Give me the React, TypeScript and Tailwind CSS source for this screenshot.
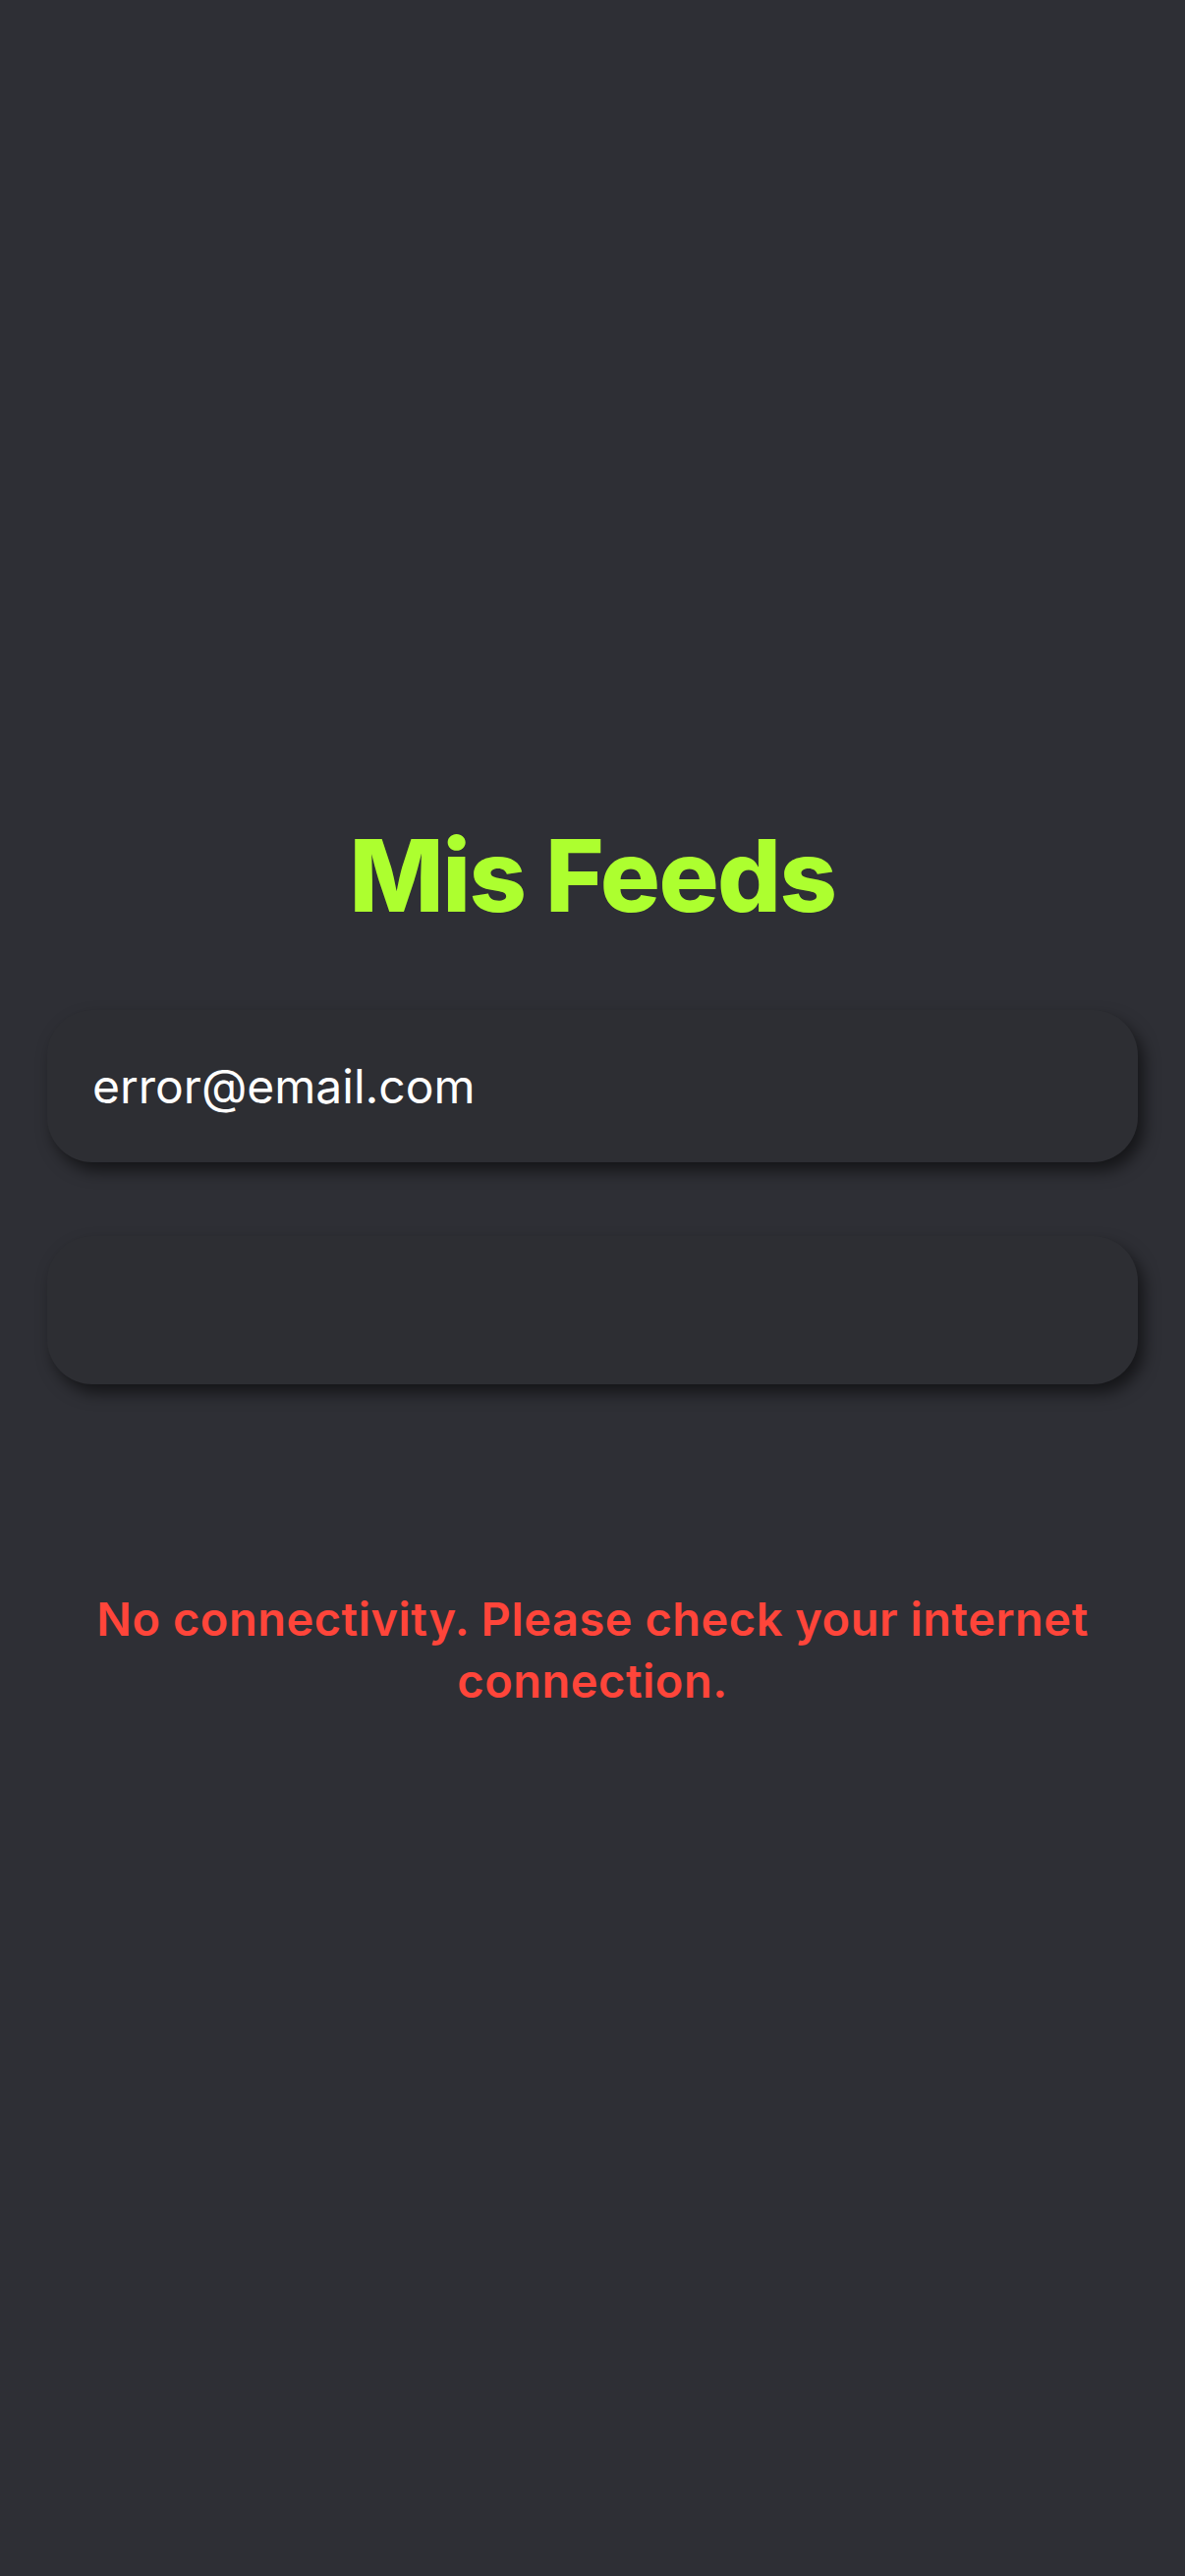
export default function App() {
  return (
    <div className="min-h-[2622px] w-full bg-[#2e2f35] font-['Inter','Noto_Sans',sans-serif]">
      <div className="flex flex-col px-[48px] pt-[840px]">
        <h1 className="text-center text-[102px] font-extrabold leading-none tracking-[-1.6px] text-[#adff2f]">
          Mis Feeds
        </h1>

        <div className="mt-[86px] flex h-[155px] items-center rounded-[46px] bg-[#2d2e33] px-[46px] shadow-[6px_9px_16px_rgba(0,0,0,0.55)]">
          <span className="text-[48px] text-white">error@email.com</span>
        </div>

        <div className="mt-[75px] h-[151px] rounded-[46px] bg-[#2d2e33] shadow-[6px_9px_16px_rgba(0,0,0,0.55)]" />

        <p className="mt-[207px] px-[10px] text-center text-[47px] font-semibold leading-[63px] tracking-[0.5px] text-[#ff453a]">
          No connectivity. Please check your internet connection.
        </p>
      </div>
    </div>
  );
}
